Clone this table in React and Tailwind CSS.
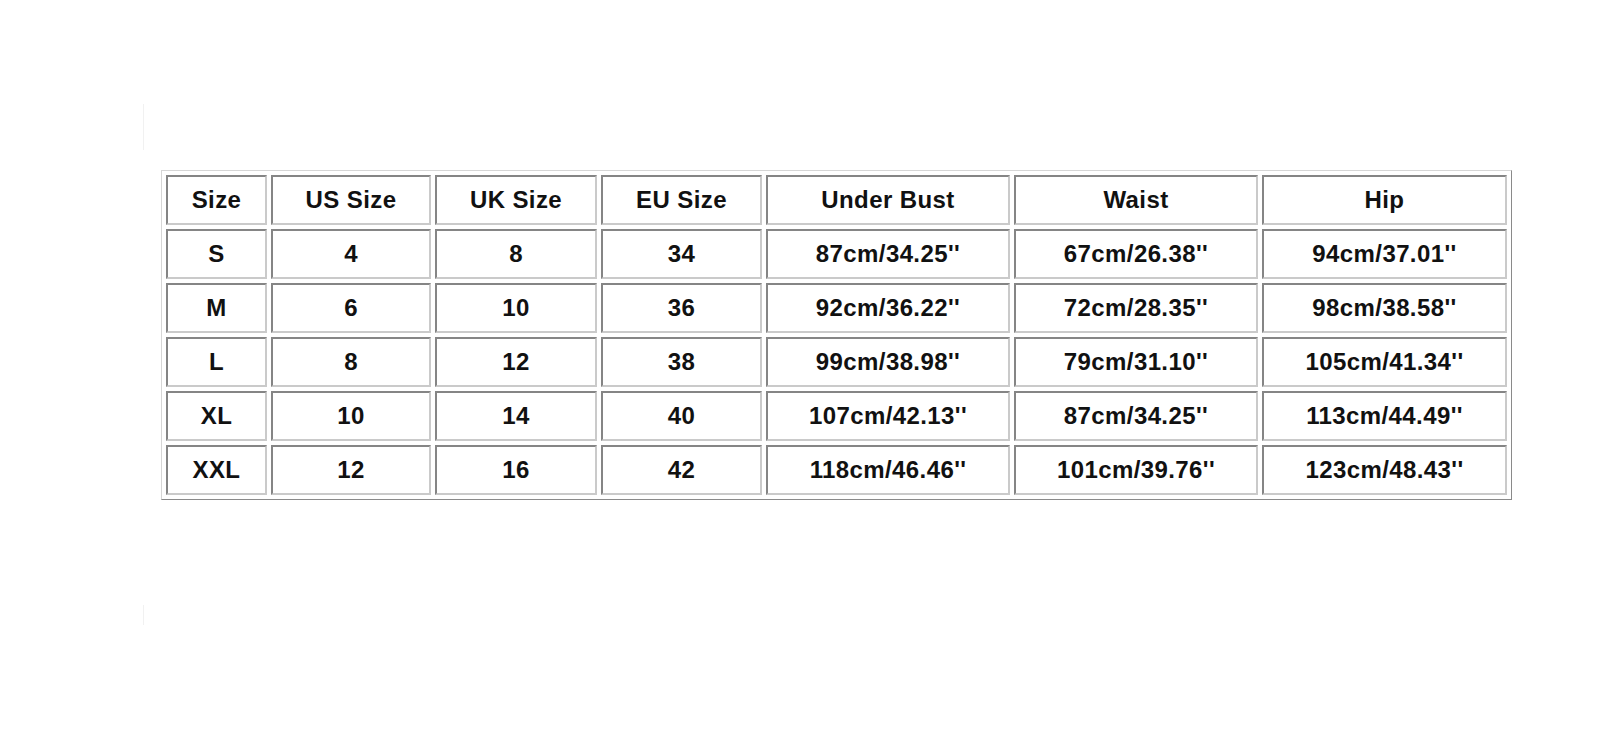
import React from "react";

const header = ["Size", "US Size", "UK Size", "EU Size", "Under Bust", "Waist", "Hip"];
const rows = [
  ["S", "4", "8", "34", "87cm/34.25''", "67cm/26.38''", "94cm/37.01''"],
  ["M", "6", "10", "36", "92cm/36.22''", "72cm/28.35''", "98cm/38.58''"],
  ["L", "8", "12", "38", "99cm/38.98''", "79cm/31.10''", "105cm/41.34''"],
  ["XL", "10", "14", "40", "107cm/42.13''", "87cm/34.25''", "113cm/44.49''"],
  ["XXL", "12", "16", "42", "118cm/46.46''", "101cm/39.76''", "123cm/48.43''"],
];

function Cell({ children }) {
  return (
    <div className="flex items-center justify-center border-2 border-t-[#858585] border-l-[#858585] border-r-[#cacaca] border-b-[#cacaca] text-[24px] font-bold tracking-[0.4px] text-[#111]">
      {children}
    </div>
  );
}

export default function App() {
  return (
    <div
      className="relative w-[1600px] h-[734px] bg-white pt-[170px] pl-[161px]"
      style={{ fontFamily: '"Liberation Sans", Arial, sans-serif' }}
    >
      <div className="absolute left-[143px] top-[104px] w-px h-[46px] bg-[#f1f1f1]" />
      <div className="absolute left-[143px] top-[605px] w-px h-[20px] bg-[#f1f1f1]" />
      <div className="grid w-[1351px] grid-cols-[101px_160px_162px_161px_244px_244px_245px] auto-rows-[50px] gap-[4px] p-[4px] border border-t-[#d6d6d6] border-l-[#d6d6d6] border-r-[#8a8a8a] border-b-[#8a8a8a]">
        {header.map((h) => (
          <Cell key={h}>{h}</Cell>
        ))}
        {rows.map((r, i) =>
          r.map((c, j) => <Cell key={i + "-" + j}>{c}</Cell>)
        )}
      </div>
    </div>
  );
}
